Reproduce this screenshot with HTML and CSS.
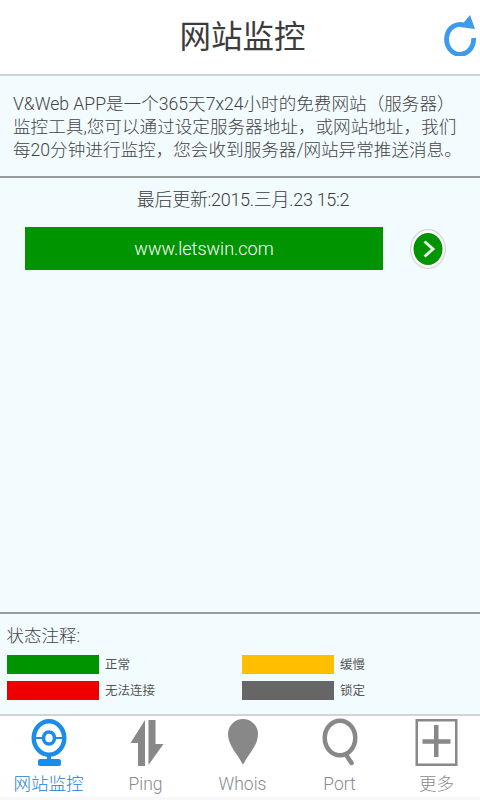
FILE: index.html
```html
<!DOCTYPE html>
<html lang="zh-CN">
  <head>
    <meta charset="UTF-8" />
    <meta name="viewport" content="width=device-width, initial-scale=1.0" />
    <title>网站监控</title>
    <link rel="stylesheet" href="styles.css">
  </head>
  <body>
    <div class="app-container">
      <header>
        <div class="header-spacer"></div>
        <h1>网站监控</h1>
        <a href="#" class="refresh-icon">
          <svg width="36" height="42" viewBox="0 0 36 42">
            <path d="M22 11A13.500 15 0 1 0 31.500 24" fill="none" stroke="#3d9bee" stroke-width="4.800"/>
            <path d="M28 1L33 15L18 13z" fill="#3d9bee"/>
          </svg>
        </a>
      </header>

      <section class="intro">
        V&amp;Web APP是一个365天7x24小时的免费网站（服务器）<br>
        监控工具,您可以通过设定服务器地址，或网站地址，我们<br>
        每20分钟进行监控，您会收到服务器/网站异常推送消息。
      </section>

      <main class="monitor">
        <p class="last-update">最后更新:2015.三月.23 15:2</p>
        <div class="site-row">
          <div class="site-bar">www.letswin.com</div>
          <a href="#" class="site-go">
            <svg width="36" height="40" viewBox="0 0 36 40">
              <ellipse cx="18" cy="20" rx="17.300" ry="19.300" fill="#fff" stroke="#d4d4d4" stroke-width="1.200"/>
              <ellipse cx="18" cy="20" rx="14.500" ry="16" fill="#009400"/>
              <path d="M14.500 12.500L23 20L14.500 27.500" fill="none" stroke="#e6f5e6" stroke-width="3"/>
            </svg>
          </a>
        </div>
      </main>

      <section class="legend">
        <h2>状态注释:</h2>
        <div class="legend-grid">
          <div class="legend-item"><span class="swatch swatch-ok"></span>正常</div>
          <div class="legend-item"><span class="swatch swatch-slow"></span>缓慢</div>
          <div class="legend-item"><span class="swatch swatch-down"></span>无法连接</div>
          <div class="legend-item"><span class="swatch swatch-lock"></span>锁定</div>
        </div>
      </section>

      <nav class="tabs">
        <a href="#" class="tab active">
          <svg width="44" height="50" viewBox="0 0 44 50">
            <ellipse cx="22" cy="22" rx="15.250" ry="16.750" fill="none" stroke="#1a8ceb" stroke-width="4.500"/>
            <ellipse cx="22" cy="22" rx="5.500" ry="6" fill="none" stroke="#1a8ceb" stroke-width="3.500"/>
            <path d="M8 22h9M27 22h9" fill="none" stroke="#1a8ceb" stroke-width="2"/>
            <path d="M20 39h4v5h-4z" fill="#1a8ceb"/>
            <rect x="11" y="43" width="23" height="7" rx="2" fill="#1a8ceb"/>
          </svg>
          <span>网站监控</span>
        </a>
        <a href="#" class="tab">
          <svg width="44" height="50" viewBox="0 0 44 50">
            <path d="M21 4V50H14V27H6.500z" fill="#888"/>
            <path d="M24.500 4H31.500V28H39.500L24.500 49z" fill="#888"/>
          </svg>
          <span>Ping</span>
        </a>
        <a href="#" class="tab">
          <svg width="44" height="50" viewBox="0 0 44 50">
            <path d="M22 49C17 38 7 30 7 18A15 15 0 0 1 37 18C37 30 27 38 22 49z" fill="#888"/>
          </svg>
          <span>Whois</span>
        </a>
        <a href="#" class="tab">
          <svg width="44" height="50" viewBox="0 0 44 50">
            <ellipse cx="22" cy="22" rx="15.250" ry="17.250" fill="none" stroke="#888" stroke-width="4.500"/>
            <path d="M27.500 38L33.500 47" fill="none" stroke="#888" stroke-width="4.500" stroke-linecap="round"/>
          </svg>
          <span>Port</span>
        </a>
        <a href="#" class="tab">
          <svg width="44" height="50" viewBox="0 0 44 50">
            <rect x="1.750" y="4.250" width="39.500" height="44.500" fill="none" stroke="#888" stroke-width="2.500"/>
            <path d="M21.250 9V41M7.500 25.500H35.500" fill="none" stroke="#888" stroke-width="4.500"/>
          </svg>
          <span>更多</span>
        </a>
      </nav>
    </div>
  </body>
</html>
```

FILE: styles.css
```css
* {
  box-sizing: border-box;
  margin: 0;
  padding: 0;
}

html,
body {
  height: 100%;
  overflow: hidden;
}

body {
  font-family: Roboto, "Noto Sans CJK SC", sans-serif;
  background-color: #ffffff;
  color: #444444;
}

.app-container {
  display: flex;
  flex-direction: column;
  height: 800px;
}

header {
  height: 76px;
  flex-shrink: 0;
  display: flex;
  align-items: center;
  padding: 0 0 4px 0;
  background-color: #ffffff;
  border-bottom: 2px solid #cfd4d5;
}

header h1 {
  flex-grow: 1;
  margin-bottom: 2px;
  padding-left: 5px;
  text-align: center;
  font-size: 31.5px;
  font-weight: 400;
  color: #3c3c3c;
}

.header-spacer,
.refresh-icon {
  width: 62px;
  flex-shrink: 0;
}

.refresh-icon {
  display: flex;
  justify-content: flex-start;
  padding-left: 24px;
}

.intro {
  height: 102px;
  flex-shrink: 0;
  padding: 17px 0 0 13px;
  font-size: 17.6px;
  font-weight: 300;
  line-height: 23px;
  white-space: nowrap;
  background-color: #f2fbfe;
  border-bottom: 2px solid #9a9d9e;
}

.monitor {
  flex-grow: 1;
  background-color: #f2fbfe;
}

.last-update {
  margin-top: 10px;
  padding-left: 6px;
  text-align: center;
  font-size: 18px;
  font-weight: 300;
  line-height: 24px;
  letter-spacing: -0.3px;
  color: #3c3c3c;
}

.site-row {
  display: flex;
  align-items: center;
  margin-top: 15px;
  padding-left: 25px;
}

.site-bar {
  width: 358px;
  height: 43px;
  line-height: 43px;
  text-align: center;
  font-size: 18px;
  font-weight: 300;
  color: #ffffff;
  background-color: #009400;
}

.site-go {
  display: flex;
  margin-left: 27px;
}

.legend {
  height: 104px;
  flex-shrink: 0;
  padding: 10px 6.5px 0;
  background-color: #f2fbfe;
  border-top: 2px solid #9a9d9e;
  border-bottom: 2px solid #cfd4d5;
}

.legend h2 {
  font-size: 17.5px;
  font-weight: 300;
  line-height: 24px;
}

.legend-grid {
  display: grid;
  grid-template-columns: 235px 1fr;
  row-gap: 7px;
  margin-top: 7px;
}

.legend-item {
  display: flex;
  align-items: center;
  font-size: 12.5px;
  line-height: 19px;
  color: #555555;
}

.swatch {
  width: 92px;
  height: 19px;
  margin-right: 6.5px;
}

.swatch-ok {
  background-color: #009400;
}
.swatch-slow {
  background-color: #ffbe00;
}
.swatch-down {
  background-color: #ee0000;
}
.swatch-lock {
  background-color: #666666;
}

.tabs {
  height: 84px;
  flex-shrink: 0;
  display: grid;
  grid-template-columns: repeat(5, 80px);
  column-gap: 17px;
  padding-left: 8.5px;
  background-color: #ffffff;
  border-bottom: 3px solid #f8f8f8;
}

.tab {
  display: flex;
  flex-direction: column;
  align-items: center;
  text-decoration: none;
  font-size: 17.5px;
  font-weight: 300;
  line-height: 24px;
  color: #8a8a8a;
}

.tab svg {
  flex-shrink: 0;
}

.tab span {
  margin-top: 6px;
}

.tab.active {
  color: #1a80d8;
}
```
